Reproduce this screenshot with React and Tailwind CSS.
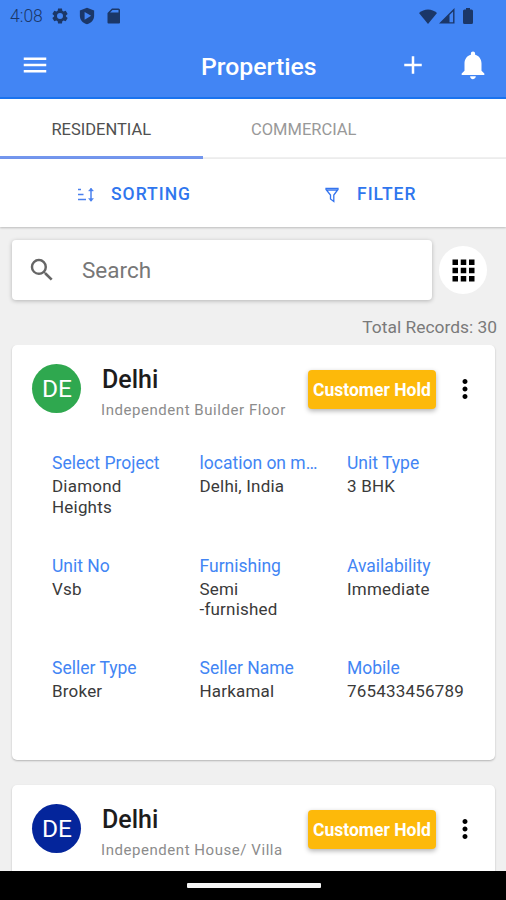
import React, { useState } from 'react';
import {
  MdMenu,
  MdAdd,
  MdNotifications,
  MdSearch,
  MdApps,
  MdMoreVert
} from 'react-icons/md';

const tabs = ['RESIDENTIAL', 'COMMERCIAL'];

const properties = [
  {
    id: 1,
    initials: 'DE',
    color: 'bg-[#2fa84f]',
    title: 'Delhi',
    type: 'Independent Builder Floor',
    status: 'Customer Hold',
    fields: [
      { label: 'Select Project', value: 'Diamond Heights' },
      { label: 'location on m…', value: 'Delhi, India' },
      { label: 'Unit Type', value: '3 BHK' },
      { label: 'Unit No', value: 'Vsb' },
      { label: 'Furnishing', value: 'Semi\n-furnished' },
      { label: 'Availability', value: 'Immediate' },
      { label: 'Seller Type', value: 'Broker' },
      { label: 'Seller Name', value: 'Harkamal' },
      { label: 'Mobile', value: '765433456789' }
    ]
  },
  {
    id: 2,
    initials: 'DE',
    color: 'bg-[#04259b]',
    title: 'Delhi',
    type: 'Independent House/ Villa',
    status: 'Customer Hold',
    fields: []
  }
];

const StatusBar = () => (
  <div className="flex h-8 shrink-0 items-center justify-between pl-[10px] pr-[33px] text-[#1b3768]">
    <div className="flex items-center">
      <span className="w-[41px] pt-px text-[17.5px] font-light leading-none">4:08</span>
      <svg className="h-[18px] w-[18px]" viewBox="0 0 24 24">
        <path
          fill="currentColor"
          fillRule="evenodd"
          d="M9.400 2h5.200l.5 3 1.700 1 2.800-1.100 2.600 4.500-2.300 1.800v1.600l2.300 1.800-2.600 4.500-2.800-1.100-1.700 1-.5 3H9.400l-.5-3-1.700-1-2.800 1.100-2.600-4.500 2.300-1.800v-1.600L1.800 9.400l2.600-4.500L7.200 6l1.700-1zM12 8a4 4 0 1 0 0 8 4 4 0 0 0 0-8z"
        />
      </svg>
      <svg className="ml-[9px] h-[18px] w-[18px]" viewBox="0 0 24 24">
        <path
          fill="currentColor"
          fillRule="evenodd"
          d="M12 1 21.500 4.500v7c0 5.500-4 9.800-9.500 11.500-5.500-1.700-9.500-6-9.500-11.500v-7zM8.800 6.500v10.500l8.700-5.200z"
        />
      </svg>
      <svg className="ml-[11px] h-[16px] w-[13px]" viewBox="0 0 13 16">
        <path
          fill="currentColor"
          fillRule="evenodd"
          d="M5 .5h6.500A1.500 1.500 0 0 1 13 2v12.500a1 1 0 0 1-1 1H1.500a1 1 0 0 1-1-1V5zM5.500 2 3 4.500h8.500V2z"
        />
      </svg>
    </div>
    <div className="flex items-center">
      <svg className="h-[15px] w-[18px]" viewBox="0 0 18 15">
        <path fill="currentColor" d="M0 4C5-.8 13-.8 18 4L9 15z" />
      </svg>
      <svg className="ml-[2px] h-[16px] w-[16px]" viewBox="0 0 16 16">
        <path fill="currentColor" fillRule="evenodd" d="M0 15.500 15.500 0v15.500zM10.500 7v7.300h3.600V3.400z" />
      </svg>
      <svg className="ml-[8px] h-[16px] w-[10px]" viewBox="0 0 10 16">
        <path fill="currentColor" d="M3 0h4v1.500h1.500A1.500 1.500 0 0 1 10 3v11.500A1.500 1.500 0 0 1 8.500 16h-7A1.500 1.500 0 0 1 0 14.500V3a1.500 1.500 0 0 1 1.500-1.500H3z" />
      </svg>
    </div>
  </div>
);

const SortIcon = () => (
  <svg className="h-[16px] w-[18px]" viewBox="0 0 18 16" fill="none" stroke="#4a80ee" strokeWidth="1.300">
    <path d="M1 2.500h3M1 7.500h5.500M1 12.500h8" />
    <path d="M14 1.500v12.500" strokeWidth="1.500" />
    <path d="M11.500 4 14 1l2.500 3zM11.500 11.500l2.500 3 2.500-3z" fill="#4a80ee" strokeWidth=".4" />
  </svg>
);

const FilterIcon = () => (
  <svg className="h-[16px] w-[14px]" viewBox="0 0 14 16" fill="none" stroke="#3474ee" strokeWidth="1.300">
    <path d="M1 1.300h12v1.200L8.800 8v6.500L5.500 12V8L1 2.500zM1 3h12" />
  </svg>
);

const PropertyCard = ({ property }) => (
  <div className="h-[415px] shrink-0 rounded-[5px] bg-white pt-[19px] shadow-[0_1px_2px_rgba(0,0,0,0.25)]">
    <div className="flex items-start pl-5 pr-[15px]">
      <div className={`flex h-[49px] w-[49px] items-center justify-center rounded-full pl-px pt-[2px] text-[24.5px] text-white ${property.color}`}>
        {property.initials}
      </div>
      <div className="ml-5 w-[207px] whitespace-nowrap pt-px">
        <h3 className="pl-px text-[25px] font-medium leading-[30px] text-[#1c1c1c]">{property.title}</h3>
        <p className="mt-[5px] text-[15px] leading-[20px] tracking-[0.55px] text-[#8c8c8c]">{property.type}</p>
      </div>
      <div className="mt-[6px] flex h-[39px] w-[128px] items-center justify-center whitespace-nowrap rounded-[4px] bg-[#fdb90a] pt-px text-[17.5px] font-bold text-white shadow-[0_2px_5px_rgba(0,0,0,0.3)]">
        {property.status}
      </div>
      <MdMoreVert className="ml-[14px] mt-[10px] h-[30px] w-[30px] shrink-0 text-black" />
    </div>
    <div className="mt-[31px] grid grid-cols-[147.5px_147.5px_130px] pl-10">
      {property.fields.map((field) => (
        <div key={field.label} className="h-[102.500px]">
          <p className="whitespace-nowrap text-[17.5px] leading-[24px] text-[#4285f4]">{field.label}</p>
          <p className="mt-px max-w-[100px] whitespace-pre-line text-[17px] leading-[20.500px] tracking-[0.2px] text-[#3a3a3a]">
            {field.value}
          </p>
        </div>
      ))}
    </div>
  </div>
);

const App = () => {
  const [activeTab, setActiveTab] = useState('RESIDENTIAL');

  return (
    <div className="flex h-[900px] w-[506px] flex-col overflow-hidden bg-[#f0f0f0] font-['Roboto',sans-serif]">
      <header className="h-[99px] shrink-0 border-b-2 border-[#1a73ee] bg-[#4285f4]">
        <StatusBar />
        <div className="flex h-[66px] items-center pl-5 pr-[16px] text-white">
          <MdMenu className="h-[30px] w-[30px]" />
          <h1 className="ml-[151px] w-[197px] pt-[3px] text-[24.8px] font-medium">Properties</h1>
          <MdAdd className="h-[30px] w-[30px]" />
          <MdNotifications className="ml-[28px] h-[34px] w-[34px]" />
        </div>
      </header>

      {/* Tabs */}
      <div className="flex h-[60px] shrink-0 border-b-2 border-[#f0f0f0] bg-white">
        {tabs.map((tab) => (
          <button
            key={tab}
            onClick={() => setActiveTab(tab)}
            className={`-mb-px h-[60px] w-[202.500px] border-b-3 pt-[5px] text-[16.5px] ${
              activeTab === tab ? 'border-[#7396ee] text-[#505050]' : 'border-transparent text-[#999]'
            }`}
          >
            {tab}
          </button>
        ))}
      </div>

      <div className="flex h-[68px] shrink-0 items-center bg-white pl-[77px] pt-[3px] text-[17.5px] font-medium tracking-[1px] text-[#2f76ee] shadow-[0_1px_2px_rgba(0,0,0,0.22)]">
        <button className="flex w-[248px] items-center gap-[16px]">
          <SortIcon />
          SORTING
        </button>
        <button className="flex items-center gap-[18px]">
          <FilterIcon />
          FILTER
        </button>
      </div>

      {/* Search */}
      <div className="mt-[13px] flex shrink-0 items-center gap-[7px] pl-3">
        <div className="flex h-[60px] w-[420px] items-center rounded-[4px] bg-white pl-[15px] shadow-[0_1px_4px_rgba(0,0,0,0.25)]">
          <MdSearch className="h-[30px] w-[30px] text-[#666]" />
          <span className="ml-[25px] pt-[2px] text-[22.5px] text-[#777]">Search</span>
        </div>
        <button className="flex h-12 w-12 items-center justify-center rounded-full bg-white">
          <MdApps className="h-[33px] w-[33px] text-black" />
        </button>
      </div>
      <p className="mt-[15px] shrink-0 pr-[9px] text-right text-[17.4px] leading-[24px] text-[#7a7a7a]">Total Records: 30</p>

      {/* Property list */}
      <div className="mt-[6px] flex min-h-0 flex-1 flex-col gap-[25px] overflow-hidden pl-3 pr-[11px]">
        {properties.map((property) => (
          <PropertyCard key={property.id} property={property} />
        ))}
      </div>

      <footer className="flex h-[29px] shrink-0 items-center justify-center bg-black pl-px">
        <div className="h-[5px] w-[134px] rounded-[1px] bg-[#f5f5f5]" />
      </footer>
    </div>
  );
};

export default App;
